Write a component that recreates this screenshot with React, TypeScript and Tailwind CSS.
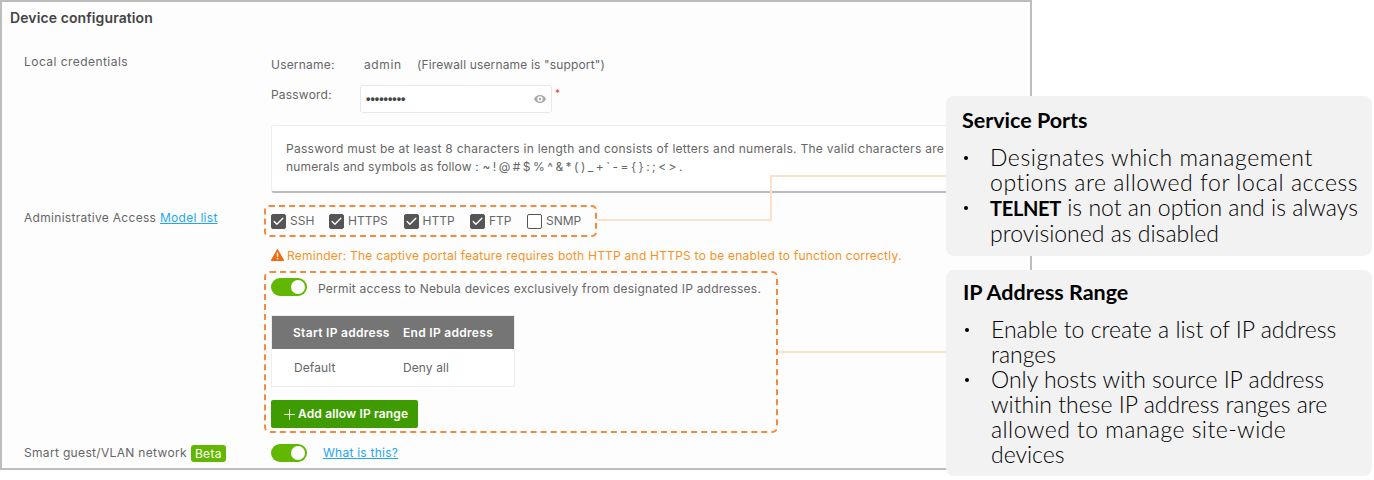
import React from 'react';
import { Check, Eye, Plus } from 'lucide-react';

const ports = [
  { label: 'SSH', checked: true, width: 'w-[58px]' },
  { label: 'HTTPS', checked: true, width: 'w-[74.5px]' },
  { label: 'HTTP', checked: true, width: 'w-[66.5px]' },
  { label: 'FTP', checked: true, width: 'w-[57px]' },
  { label: 'SNMP', checked: false, width: 'w-[56px]' },
];

const Toggle: React.FC = () => (
  <div className="flex h-[18px] w-[36px] shrink-0 items-center justify-end rounded-full bg-[#62b800] pr-[2px]">
    <div className="h-[14px] w-[14px] rounded-full bg-white" />
  </div>
);

const Callout: React.FC<{ title: string; className: string; children: React.ReactNode }> = ({
  title,
  className,
  children,
}) => (
  <div className={`absolute left-[946px] w-[426px] rounded-lg bg-[#f2f2f2] font-['Lato',sans-serif] text-black ${className}`}>
    <div className="text-[21.5px] leading-[26px] font-bold">{title}</div>
    <ul className="mt-[12px] pl-[28px] text-[23px] leading-[25px] font-light whitespace-nowrap">{children}</ul>
  </div>
);

const Bullet: React.FC<{ children: React.ReactNode }> = ({ children }) => (
  <li className="relative">
    <span className="absolute top-[11px] left-[-26px] h-[4px] w-[4px] rounded-full bg-black" />
    {children}
  </li>
);

const App: React.FC = () => {
  return (
    <div className="relative h-[480px] w-[1374px] overflow-hidden bg-white font-['Inter',sans-serif] text-[12px] text-[#666]">
      {/* Main panel */}
      <div className="h-[470px] w-[1032px] border-2 border-[#bdbdbd] bg-[#fdfdfd] pl-[8px]">
        <h2 className="pt-[6px] text-[14px] leading-[20px] font-semibold tracking-[0.1px] text-[#444]">Device configuration</h2>

        <div className="mt-[26px] flex">
          <div className="w-[261px] pl-[14px]">
            <div className="leading-[16px] tracking-[0.45px]">Local credentials</div>
          </div>
          <div className="w-[750px]">
            <div className="flex h-[16px] items-center pt-[5px] leading-[16px]">
              <span className="w-[93px] tracking-[0.2px]">Username:</span>
              <span className="w-[53px] tracking-[0.6px]">admin</span>
              <span className="tracking-[0.15px]">(Firewall username is "support")</span>
            </div>
            <div className="mt-[15px] flex items-start">
              <span className="w-[89px] pt-[2px] leading-[16px] tracking-[0.2px]">Password:</span>
              <div className="flex h-[28px] w-[192px] items-center justify-between rounded-[3px] border border-[#e8e8e8] bg-white pr-[3px] pl-[5px]">
                <span className="font-['Liberation_Sans',sans-serif] text-[12.5px] leading-none font-bold text-[#444]">•••••••••</span>
                <Eye size={16} className="fill-[#aaa] text-white" />
              </div>
              <span className="ml-[3px] text-[10px] leading-[16px] text-[#e53935]">*</span>
            </div>
            <div className="mt-[12px] h-[68px] rounded-[3px] border border-b-2 border-[#eee] border-b-[#bbb] bg-white px-[14px] pt-[14px] leading-[18px]">
              <div className="tracking-[0.27px] whitespace-nowrap">Password must be at least 8 characters in length and consists of letters and numerals. The valid characters are</div>
              <div className="whitespace-nowrap">
                <span className="tracking-[0.15px]">numerals and symbols as follow : </span>
                <span className="tracking-[-0.45px]">~ ! @ # $ % ^ &amp; * ( ) _ + ` - = {'{ }'} : ; &lt; &gt; .</span>
              </div>
            </div>
          </div>
        </div>

        <div className="mt-[12px] flex">
          <div className="w-[261px] pt-[5px] pl-[14px] leading-[16px] tracking-[0.3px]">
            Administrative Access{' '}
            <a className="text-[#1ea7f2] underline">Model list</a>
          </div>
          <div className="ml-[-7px] flex h-[32px] w-[333px] items-center rounded-[5px] border-2 border-dashed border-[#f58a3c] pl-[5px]">
            {ports.map((port) => (
              <div key={port.label} className={`flex items-center gap-[4px] ${port.width}`}>
                <div className={`flex h-[15px] w-[15px] items-center justify-center rounded-[2px] border border-[#555] ${port.checked ? 'bg-[#555]' : 'bg-white'}`}>
                  {port.checked && <Check size={13} strokeWidth={2.5} className="text-white" />}
                </div>
                <span>{port.label}</span>
              </div>
            ))}
          </div>
        </div>

        <div className="mt-[10px] ml-[261px] flex h-[18px] items-center gap-[3px] text-[#f7931e]">
          <svg width="13" height="12" viewBox="0 0 13 12" className="mb-[3px] shrink-0">
            <path d="M6.5 0.5 L12.8 11.5 L0.2 11.5 Z" fill="#f26a10" stroke="#f26a10" strokeLinejoin="round" />
            <rect x="5.8" y="3.6" width="1.4" height="4.4" fill="#fff" />
            <rect x="5.8" y="8.9" width="1.4" height="1.4" fill="#fff" />
          </svg>
          <span className="tracking-[0.23px] whitespace-nowrap">Reminder: The captive portal feature requires both HTTP and HTTPS to be enabled to function correctly.</span>
        </div>

        <div className="mt-[6px] ml-[254px] h-[162px] w-[514px] rounded-[6px] border-2 border-dashed border-[#f58a3c] pt-[3px] pl-[5px]">
          <div className="flex items-center gap-[11px]">
            <Toggle />
            <span className="pt-[4px] leading-[18px] tracking-[0.22px] whitespace-nowrap">Permit access to Nebula devices exclusively from designated IP addresses.</span>
          </div>
          <div className="mt-[17px] w-[244px] border border-[#eeeeee] bg-white">
            <div className="flex h-[33px] items-center bg-[#757575] font-semibold tracking-[0.3px] text-white">
              <span className="w-[111px] pl-[21px] whitespace-nowrap">Start IP address</span>
              <span className="pl-[20px] whitespace-nowrap">End IP address</span>
            </div>
            <div className="flex h-[37px] items-center tracking-[0.1px]">
              <span className="w-[131px] pl-[22px]">Default</span>
              <span>Deny all</span>
            </div>
          </div>
          <button className="mt-[13px] flex h-[28px] w-[147px] items-center rounded-[2px] bg-[#3f9c00] pl-[10px] font-semibold tracking-[0.15px] text-white">
            <Plus size={17} strokeWidth={1.2} />
            <span>Add allow IP range</span>
          </button>
        </div>

        <div className="mt-[11px] flex items-center">
          <div className="flex w-[261px] items-center gap-[4px] pl-[14px]">
            <span className="tracking-[0.33px]">Smart guest/VLAN network</span>
            <span className="rounded-[3px] bg-[#62b800] px-[4px] leading-[17px] tracking-[0.3px] text-white">Beta</span>
          </div>
          <Toggle />
          <a className="ml-[16px] tracking-[0.25px] text-[#1ea7f2] underline">What is this?</a>
        </div>
      </div>

      {/* Connectors */}
      <div className="absolute top-[175px] left-[770px] h-[46px] w-[176px] border-t-2 border-l-2 border-[#fde0c8]" />
      <div className="absolute top-[219px] left-[597px] h-[2px] w-[175px] bg-[#fde0c8]" />
      <div className="absolute top-[351px] left-[778px] h-[2px] w-[168px] bg-[#fde0c8]" />

      <Callout title="Service Ports" className="top-[96px] h-[160px] pt-[11px] pl-[16px]">
        <Bullet>
          <span className="tracking-[0.55px]">Designates which management<br />options are allowed for local access</span>
        </Bullet>
        <Bullet>
          <b className="text-[20px] font-bold tracking-[-0.3px]">TELNET</b> is not an option and is always<br />provisioned as disabled
        </Bullet>
      </Callout>
      <Callout title="IP Address Range" className="top-[270px] h-[206px] pt-[9px] pl-[17px]">
        <Bullet>Enable to create a list of IP address<br />ranges</Bullet>
        <Bullet>Only hosts with source IP address<br />within these IP address ranges are<br /><span className="tracking-[0.45px]">allowed to manage site-wide</span><br />devices</Bullet>
      </Callout>
    </div>
  );
};

export default App;
